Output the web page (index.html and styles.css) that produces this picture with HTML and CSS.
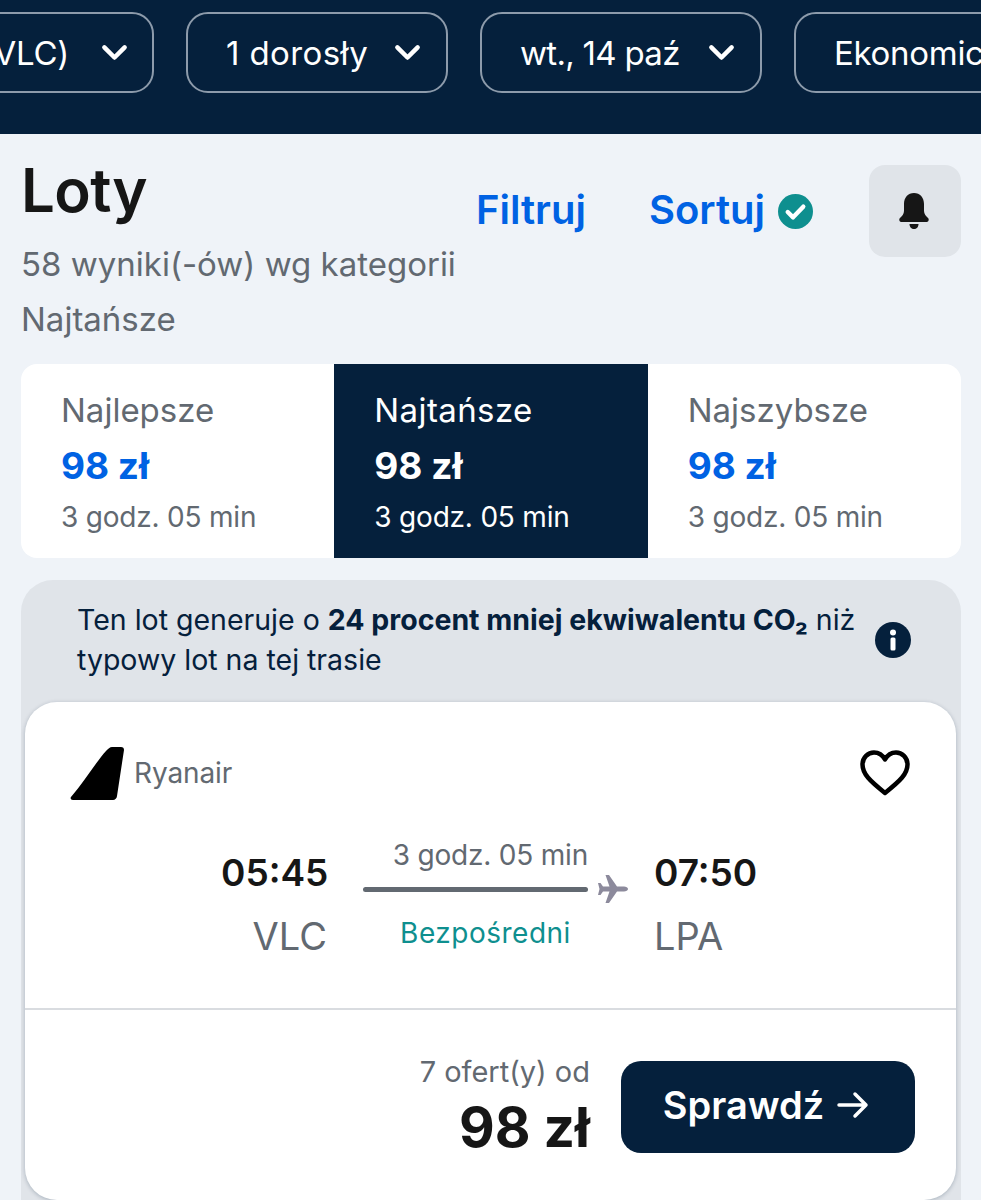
FILE: index.html
```html
<!DOCTYPE html>
<html lang="pl">
<head>
    <meta charset="UTF-8">
    <meta name="viewport" content="width=device-width, initial-scale=1.0">
    <title>Loty</title>
    <link rel="stylesheet" href="styles.css">
</head>
<body>
    <!-- pasek wyszukiwania -->
    <header class="search-bar">
        <div class="pill pill-route">
            <span>Walencja (VLC)</span>
            <svg class="chevron" viewBox="0 0 24 16"><path d="M3 3l9 9 9-9"/></svg>
        </div>
        <div class="pill pill-people">
            <span>1 dorosły</span>
            <svg class="chevron" viewBox="0 0 24 16"><path d="M3 3l9 9 9-9"/></svg>
        </div>
        <div class="pill pill-date">
            <span>wt., 14 paź</span>
            <svg class="chevron" viewBox="0 0 24 16"><path d="M3 3l9 9 9-9"/></svg>
        </div>
        <div class="pill pill-cabin">
            <span>Ekonomiczna</span>
            <svg class="chevron" viewBox="0 0 24 16"><path d="M3 3l9 9 9-9"/></svg>
        </div>
    </header>

    <main class="results">
        <div class="results-head">
            <div class="results-title">
                <h1>Loty</h1>
                <p>58 wyniki(-ów) wg kategorii</p>
                <p>Najtańsze</p>
            </div>
            <div class="results-actions">
                <a class="action action-filter">Filtruj</a>
                <a class="action action-sort">Sortuj</a>
                <svg class="sort-check" viewBox="0 0 36 36">
                    <circle cx="18" cy="18" r="18" fill="#0e8f8f"/>
                    <path d="M10 18.5l5.5 5.5L26 13" fill="none" stroke="#fff" stroke-width="4.5" stroke-linecap="round" stroke-linejoin="round"/>
                </svg>
                <button class="bell-btn">
                    <svg viewBox="0 0 32 38" width="32" height="38">
                        <path d="M16 1c-6 0-10 4.500-10 11v7c0 3-2 5-4 7-1.500 1.500-.5 4 1.500 4h25c2 0 3-2.500 1.500-4-2-2-4-4-4-7v-7C26 5.500 22 1 16 1z" fill="#161616"/>
                        <path d="M11.500 32h9c0 3-2 5-4.500 5s-4.500-2-4.500-5z" fill="#161616"/>
                    </svg>
                </button>
            </div>
        </div>

        <div class="tabs">
            <div class="tab">
                <div class="tab-label">Najlepsze</div>
                <div class="tab-price">98 zł</div>
                <div class="tab-time">3 godz. 05 min</div>
            </div>
            <div class="tab tab-active">
                <div class="tab-label">Najtańsze</div>
                <div class="tab-price">98 zł</div>
                <div class="tab-time">3 godz. 05 min</div>
            </div>
            <div class="tab">
                <div class="tab-label">Najszybsze</div>
                <div class="tab-price">98 zł</div>
                <div class="tab-time">3 godz. 05 min</div>
            </div>
        </div>

        <section class="eco-box">
            <div class="eco-note">
                <p>Ten lot generuje o <b>24 procent mniej ekwiwalentu CO₂</b> niż typowy lot na tej trasie</p>
                <svg class="info-icon" viewBox="0 0 36 36">
                    <circle cx="18" cy="18" r="18" fill="#05203c"/>
                    <circle cx="18" cy="10.500" r="3" fill="#fff"/>
                    <rect x="15.500" y="15.500" width="5" height="13" rx="1.500" fill="#fff"/>
                </svg>
            </div>

            <div class="flight-card">
                <div class="carrier">
                    <svg class="tail" viewBox="0 0 54 54"><path d="M42 1h9c2 0 3 1 3 3l-7 46c0 2-2 4-4 4H3c-2 0-3-2-2-3C14 36 26 16 36 5c2-2 4-4 6-4z" fill="#000"/></svg>
                    <span class="carrier-name">Ryanair</span>
                    <svg class="heart" viewBox="0 0 50 46"><path d="M25 43C10 31 2.500 24 2.500 14.500 2.500 7.500 8 2.500 14 2.500c4.500 0 8.500 2.500 11 7 2.500-4.500 6.500-7 11-7 6 0 11.500 5 11.500 12C47.500 24 40 31 25 43z" fill="none" stroke="#000" stroke-width="4.500" stroke-linejoin="round"/></svg>
                </div>

                <div class="leg">
                    <div class="leg-end leg-from">
                        <div class="leg-time">05:45</div>
                        <div class="leg-code">VLC</div>
                    </div>
                    <div class="leg-mid">
                        <div class="leg-duration">3 godz. 05 min</div>
                        <div class="leg-line">
                            <span class="line-bar"></span>
                            <svg class="line-plane" viewBox="0 0 30 30"><path d="M30 15c0-1.500-2-2.500-4-2.500h-7L11 1H7.500l4 11.500H5L2.500 9H0l1.500 6L0 21h2.500L5 17.500h6.500l-4 11.500H11l8-11.500h7c2 0 4-1 4-2.500z" fill="#8c8a9c"/></svg>
                        </div>
                        <div class="leg-stops">Bezpośredni</div>
                    </div>
                    <div class="leg-end">
                        <div class="leg-time">07:50</div>
                        <div class="leg-code">LPA</div>
                    </div>
                </div>

                <div class="card-foot">
                    <div class="offer">
                        <div class="offer-count">7 ofert(y) od</div>
                        <div class="offer-price">98 zł</div>
                    </div>
                    <button class="check-btn">
                        <span>Sprawdź</span>
                        <svg viewBox="0 0 32 28" width="32" height="28"><path d="M2 14h27M18 3l11 11-11 11" fill="none" stroke="#fff" stroke-width="3.500" stroke-linecap="round" stroke-linejoin="round"/></svg>
                    </button>
                </div>
            </div>
        </section>
    </main>
</body>
</html>
```

FILE: styles.css
```css
* {
    margin: 0;
    padding: 0;
    box-sizing: border-box;
}

html, body {
    height: 1200px;
    overflow: hidden;
}

body {
    font-family: 'Inter', 'Noto Sans', sans-serif;
    background: #eff3f8;
    color: #161616;
}

/* search bar */
.search-bar {
    height: 134px;
    background: #05203c;
    display: flex;
    align-items: flex-start;
    gap: 32px;
    padding-top: 12px;
    margin-left: -170px;
    width: 1400px;
}

.pill {
    height: 81px;
    border: 2px solid #8d9bab;
    border-radius: 22px;
    display: flex;
    align-items: center;
    justify-content: space-between;
    padding: 0 25px 0 38px;
    color: #fff;
    font-size: 33px;
    letter-spacing: -.3px;
    white-space: nowrap;
}

.pill-route {
    width: 324px;
    justify-content: flex-end;
    gap: 32px;
    padding-right: 24px;
}

.pill-people {
    width: 262px;
    letter-spacing: .4px;
}

.pill-date {
    width: 282px;
    letter-spacing: -.7px;
}

.pill-cabin { width: 300px; }

.chevron {
    width: 27px;
    height: 18px;
    flex: none;
}

.chevron path {
    fill: none;
    stroke: #fff;
    stroke-width: 4;
    stroke-linecap: round;
    stroke-linejoin: round;
}

/* results */
.results {
    padding: 0 20px 0 21px;
}

.results-head {
    display: flex;
    justify-content: space-between;
    height: 230px;
}

.results-title h1 {
    font-size: 60px;
    font-weight: 600;
    line-height: 70px;
    letter-spacing: -.6px;
    margin-top: 21px;
}

.results-title p {
    font-size: 33px;
    line-height: 55px;
    color: #626971;
}

.results-title h1 + p {
    margin-top: 12px;
}

.results-actions {
    display: flex;
    align-items: center;
    height: 92px;
    margin-top: 31px;
}

.action {
    color: #0062e3;
    font-size: 40px;
    font-weight: 600;
    margin-top: -4px;
}

.action-filter {
    margin-right: 63px;
}

.action-sort {
    margin-right: 13px;
}

.sort-check {
    width: 35px;
    height: 35px;
    margin-right: 56px;
}

.bell-btn {
    width: 92px;
    height: 92px;
    border: none;
    border-radius: 16px;
    background: #e0e4e9;
    display: flex;
    align-items: center;
    justify-content: center;
    padding-right: 2px;
}

/* tabs */
.tabs {
    display: grid;
    grid-template-columns: repeat(3, 1fr);
    height: 194px;
    background: #fff;
    border-radius: 16px;
    overflow: hidden;
}

.tab {
    padding: 25px 0 0 40px;
    color: #626971;
}

.tab-active {
    background: #05203c;
    color: #fff;
}

.tab-label {
    font-size: 33px;
    line-height: 42px;
}

.tab-active .tab-label {
    letter-spacing: .4px;
}

.tab-price {
    font-size: 37px;
    font-weight: 700;
    line-height: 50px;
    margin-top: 10px;
    color: #0062e3;
}

.tab-active .tab-price {
    color: #fff;
}

.tab-time {
    font-size: 28px;
    line-height: 40px;
    margin-top: 6px;
    letter-spacing: -.2px;
}

/* eco box */
.eco-box {
    margin-top: 22px;
    background: #e0e4e9;
    border-radius: 32px 32px 0 0;
    padding: 0 5px 0 4px;
    height: 640px;
}

.eco-note {
    display: flex;
    align-items: center;
    justify-content: space-between;
    height: 122px;
    padding: 0 45px 2px 52px;
    color: #05203c;
    font-size: 28.5px;
    line-height: 40px;
}

.eco-note p {
    width: 790px;
}

.info-icon {
    width: 36px;
    height: 36px;
    flex: none;
}

.flight-card {
    background: #fff;
    border-radius: 32px;
    box-shadow: 0 1px 4px rgba(5, 32, 60, .25);
    height: 498px;
}

.carrier {
    display: flex;
    align-items: center;
    padding: 44px 46px 0 45px;
}

.tail {
    width: 54px;
    height: 54px;
}

.carrier-name {
    font-size: 28px;
    color: #626971;
    margin-left: 10px;
    letter-spacing: -.1px;
}

.heart {
    width: 50px;
    height: 46px;
    margin-left: auto;
}

.leg {
    display: flex;
    margin-top: 37px;
    padding-left: 196px;
    height: 171px;
}

.leg-end {
    width: 106px;
}

.leg-from {
    text-align: right;
}

.leg-time {
    font-size: 37px;
    font-weight: 600;
    line-height: 46px;
    margin-top: 13px;
}

.leg-code {
    font-size: 38px;
    line-height: 46px;
    margin-top: 17px;
    color: #626971;
    letter-spacing: 0;
}

.leg-mid {
    width: 327px;
    padding-left: 36px;
}

.leg-duration {
    font-size: 28px;
    line-height: 36px;
    color: #626971;
    width: 225px;
    text-align: right;
    letter-spacing: -.2px;
}

.leg-line {
    display: flex;
    align-items: center;
    gap: 10px;
    height: 30px;
    margin-top: 1px;
}

.line-bar {
    width: 225px;
    height: 5px;
    border-radius: 3px;
    background: #626971;
}

.line-plane {
    width: 30px;
    height: 30px;
}

.leg-stops {
    font-size: 28px;
    line-height: 36px;
    color: #0e8f8f;
    width: 245px;
    text-align: center;
    margin-top: 11px;
    letter-spacing: .5px;
}

.card-foot {
    border-top: 2px solid #d9dce0;
    display: flex;
    justify-content: flex-end;
    gap: 31px;
    padding: 51px 41px 0 0;
}

.offer {
    text-align: right;
    margin-top: -8px;
}

.offer-count {
    font-size: 29px;
    line-height: 38px;
    color: #626971;
}

.offer-price {
    font-size: 55px;
    font-weight: 700;
    line-height: 64px;
    margin-top: 4px;
}

.check-btn {
    width: 294px;
    height: 92px;
    border: none;
    border-radius: 20px;
    background: #05203c;
    color: #fff;
    font: 600 38px 'Inter', 'Noto Sans', sans-serif;
    display: flex;
    align-items: center;
    justify-content: center;
    gap: 13px;
    padding: 0 4px 4px 0;
}
```
